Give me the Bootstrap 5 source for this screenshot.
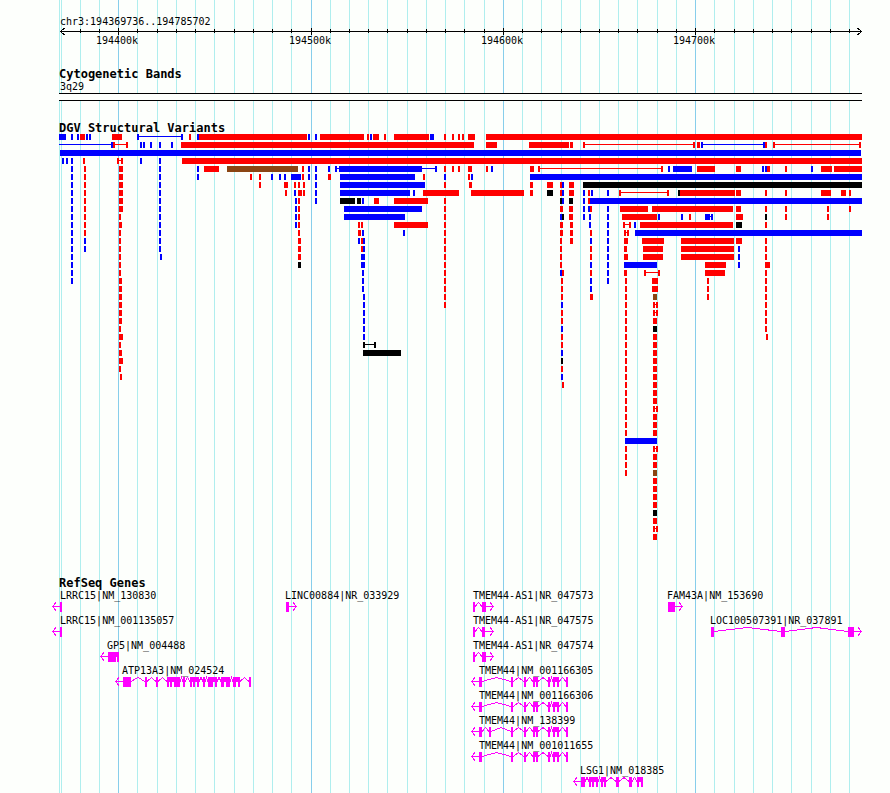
<!DOCTYPE html>
<html lang="en">
<head>
<meta charset="utf-8">
<meta name="viewport" content="width=device-width, initial-scale=1">
<title>chr3:194369736..194785702</title>
<link href="https://cdn.jsdelivr.net/npm/bootstrap@5.3.0/dist/css/bootstrap.min.css" rel="stylesheet">
<style>
body { background: #fdfffc; color: #000; font-family: "DejaVu Sans Mono", "Liberation Mono", monospace; }
.track-title { font-size: 12px; line-height: 12px; padding-left: 59px; }
.track-svg { overflow: visible; }
.track-svg text { font-size: 10px; fill: #000; white-space: pre; }
.shapes { shape-rendering: crispEdges; }
</style>
</head>
<body>
<main class="position-relative overflow-hidden">
  <svg id="grid" class="position-absolute top-0 start-0 w-100 h-100 shapes" viewBox="0 0 890 793" preserveAspectRatio="none" aria-hidden="true"></svg>
  <div class="position-relative d-flex flex-column">
    <section aria-label="Position">
      <svg id="ruler" class="track-svg d-block w-100" viewBox="0 0 890 68"></svg>
    </section>
    <section>
      <h2 class="track-title fw-bold m-0">Cytogenetic Bands</h2>
      <svg id="bands" class="track-svg d-block w-100" viewBox="0 0 890 42"></svg>
    </section>
    <section>
      <h2 class="track-title fw-bold m-0">DGV Structural Variants</h2>
      <svg id="variants" class="track-svg d-block w-100" viewBox="0 0 890 443"></svg>
    </section>
    <section>
      <h2 class="track-title fw-bold m-0">RefSeq Genes</h2>
      <svg id="genes" class="track-svg d-block w-100" viewBox="0 0 890 204"></svg>
    </section>
  </div>
</main>
<script src="https://cdn.jsdelivr.net/npm/bootstrap@5.3.0/dist/js/bootstrap.bundle.min.js"></script>
<script>
const put = (id, html) => { document.getElementById(id).innerHTML = html; };
const box = (x, y, w, h, fill) => `<rect x="${x}" y="${y}" width="${w}" height="${h}" fill="${fill}"/>`;
const label = (x, y, s) => `<text x="${x}" y="${y}">${s}</text>`;
const group = s => `<g class="shapes">${s}</g>`;
const line = (pts, c) => `<polyline points="${pts}" fill="none" stroke="${c}"/>`;

// Vertical guides every 10 kb, darker every 100 kb
const major = [118, 311, 503, 695];
const minor = [80, 99, 137, 157, 176, 195, 214, 234, 253, 272, 291, 330, 349, 368, 387, 407, 426, 445, 464, 484,
  522, 541, 561, 580, 599, 618, 637, 657, 676, 714, 734, 753, 772, 791, 811, 830, 849];
put('grid', [59, 61, ...minor].map(x => box(x, 0, 1, 793, '#afeeee')).join('') +
  major.map(x => box(x, 0, 1, 793, '#87ceeb')).join(''));

// Ruler
put('ruler', group(box(60, 31, 802, 1, '#000') +
  minor.map(x => box(x, 29, 1, 4, '#000')).join('') +
  major.map(x => box(x, 28, 1, 7, '#000')).join('') +
  line('64.5,28 60.5,31.5 64.5,35', '#000') + line('857.5,28 861.5,31.5 857.5,35', '#000')) +
  label(60, 25, 'chr3:194369736..194785702') +
  major.map((x, i) => label(x - 22, 44, `194${i + 4}00k`)).join(''));

// Chromosome band
put('bands', group(box(59, 13, 803, 8, '#fdfffc') + box(59, 13, 803, 1, '#000') + box(59, 20, 803, 1, '#000')) +
  label(60, 10, '3q29'));

// Variants, one string per row. "R10-20" is a bar, "R10" a 2-unit mark, "R10~20" a thin connector
const colours = { R: '#f00', B: '#00f', K: '#000', N: '#8b4513' };
const rows = [
 'B59-66 B71 B77 R80-85 B86 B89 R112-122 B137~183 B137 B181 R189 B197 R199-307 B308 B315 R320-364 R367 B370 R373-379 R384 R394-429 B430-434 R444 R452 R458 R462 R468-475 R486-862',
 'B59~113 B111 R113~128 R113 R126 B140 B143 B150 B159 B171 R181-474 R486-497 R529-569 R570-573 R583~695 R583 R693 R697-700 B701~765 B701 B763 R765 R773~861 R773 R859',
 'B60-861',
 'B62 B66 B71 R83 R117~123 R117 R121 B140 B159 R182-862',
 'B71 R84 R119-123 B159 B197 R204-219 N227-298 R302 B308 B315 B328 B335~437 B335 B339-422 B435 R444 R452 R458 R468-472 R486 B491 R530-534 R538~663 R538 R661 B668 B673-692 R697-715 R736-741 B762 B765 R767-770 R785 B811 R821-832 R834-862',
 'B71 R84 R119-123 B159 B197 R250 R259 B271 B279 B284 B291-301 R302 B308 B315 R328-331 B340-415 R423 B444 R468 B471 B530-862',
 'B71 R84 R119-123 B159 R259 R284-288 R294 R298 R303 B315 B340-425 R444 R469-472 R530-533 R547-553 R560 B562 R569-574 K583-862',
 'B71 R84 R119-123 B159 R285 B294 R298-302 R303 B315 B340-410 B413 R423-459 R471-524 R530-533 K547-553 R560 B562 R569-574 B583 R588 B591 B607 R619~669 R619 R667 K678 R680-735 R736-741 R765 R785 R821-831 R841-846 R849',
 'B71 R84 R119-123 B159 B295 R298 B315 K340-355 K357-361 B362 R374-379 R394-428 R444 K560 B562 K569-573 B583 R588 B590-862',
 'B71 R84 R119-123 B159 B295 R298 B344-422 R444 R560-563 R569-573 B583 B588 R590 B607 R620-648 R652-733 R736-741 R765 R785 R827 R849',
 'B71 R84 R119 B159 B295 R298 B344-405 R444 B560 K562 R569-573 B583 B589 B607 R622-657 B658 B681 R689 B705~713 B705-710 B711 R736-743 K765 R785 R827',
 'B71 R84 R119-122 B159 B295 R298 R358 R361 R394-428 R444 R560-563 R570-573 B589 B607 R623~631 R623 R629 B634 R640-733 K736-742 R765',
 'B71 R84 R119 B159 R298 R358-361 B362 B403 R444 R560-563 R570-573 R590 B607 R624~629 R624 R627 B635-862',
 'B71 B84 R119 B159 R298-301 B358 R361 B363 R444 R560 R570-573 B590 B607 R624-628 R642-664 R681-734 R736-742 R765',
 'B71 B84 R119 B159 R298-301 R361 B363 R444 R560 R590 B607 R624-627 R643-663 R681-734 B738 R765',
 'B71 R119 B160 R298-301 B361-365 R444 R560 R590 B607 R624-628 R643-663 R681-734 B738 R765',
 'B71 R119 K298-301 B361-365 R444 R560 B590 B607 B624-657 R705-726 B738 R765-770',
 'B71 R119 B362 R444 B560 R562 R590 B607 R624-627 R644~660 R644 R658 R705-725 R765',
 'B71 R119-122 B362 R444 R561 B590 B607 R625 R652-658 R707 R765',
 'R119-122 B362 R444 R561 B590 R625 R652-658 R707 R765',
 'R119-122 B363 R444 R561 R590-593 R625 N653-657 R707 R765',
 'R119-122 B363 R444 B561 R625 R653~658 R653 R656 R765',
 'R119-122 B363 R561 R625 R653~658 R653 R656 R765',
 'R119-122 B363 R561 R625 R653-657 R765',
 'R119 B363 B561 R625 K653-657 R765',
 'R119-123 B363 R561 R625 R653-657 R766',
 'R119 K363~376 K363 K374 R561 R625 R653-657',
 'R119-122 K363-401 B561 R625 R653-657',
 'R119-123 K561 R625 R653-657',
 'R119 R561 R625 R653-657',
 'R120 B561 R625 R653-657',
 'R562 R625 R653-657',
 'R625 R653-657',
 'R625 R653-657',
 'R625 R653~658 R653 R656',
 'R625 R653-657',
 'R625 R653-657',
 'R625 R653-657',
 'B625-657',
 'R625 R653~658 R653 R656',
 'R625 R653-657',
 'R625 R653-657',
 'R625 N653-657',
 'R653-657', 'R653-657', 'R653-657', 'R653-657',
 'K653-657',
 'R653-657',
 'R653~658 R653 R656',
 'R653-657'
];
put('variants', group(rows.map((row, i) => row.split(' ').map(item => {
  const [, c, a, kind, b] = item.match(/^(\w)(\d+)(?:([-~])(\d+))?$/);
  const y = i * 8, x = +a, w = b ? b - a : 2;
  return kind === '~' ? box(x, y + 2, w, 1, colours[c]) : box(x, y, w, 6, colours[c]);
}).join('')).join('')));

// Genes: [row, label x, name, arrow tip, exons as start-end]
const tmem = '479-482 511-513 524-526 533-535 536-538 548-550 553-555 557-559 566-568';
const genes = [
  [0, 60, 'LRRC15|NM_130830', 52, '60-62'],
  [1, 60, 'LRRC15|NM_001135057', 52, '60-62'],
  [2, 107, 'GP5|NM_004488', 100, '108-116 117-119'],
  [3, 122, 'ATP13A3|NM_024524', 115, '123-131 145-147 156-158 167-169 170-172 174-180 183-185 190-192 193-195 197-199 203-205 208-213 215-217 221-224 226-230 233-236 238-240 249-251'],
  [0, 285, 'LINC00884|NR_033929', 297, '286-289'],
  [0, 473, 'TMEM44-AS1|NR_047573', 494, '473-475 482-486'],
  [1, 473, 'TMEM44-AS1|NR_047575', 494, '473-475 482-485'],
  [2, 473, 'TMEM44-AS1|NR_047574', 494, '473-475 482-486'],
  [3, 479, 'TMEM44|NM_001166305', 471, tmem],
  [4, 479, 'TMEM44|NM_001166306', 471, tmem],
  [5, 479, 'TMEM44|NM_138399', 471, tmem.replace(' ', ' 489-491 ')],
  [6, 479, 'TMEM44|NM_001011655', 471, tmem],
  [7, 580, 'LSG1|NM_018385', 573, '581-585 589-591 592-594 596-598 601-603 604-606 616-619 629-632 637-639 641-643'],
  [0, 667, 'FAM43A|NM_153690', 683, '668-675'],
  [1, 710, 'LOC100507391|NR_037891', 862, '711-714 781-785 848-854']
];
put('genes', genes.map(([r, lx, name, tip, list]) => {
  const top = r * 25 + 13, mid = top + 4, c = '#f0f';
  const ex = list.split(' ').map(e => e.split('-').map(Number));
  const left = tip < ex[0][0], end = left ? ex[0][0] : ex[ex.length - 1][1];
  const back = left ? tip + 4 : tip - 4;
  let s = box(Math.min(tip, end), mid, Math.abs(end - tip), 1, c) +
    line(`${back},${mid - 3.5} ${left ? tip + .5 : tip - .5},${mid + .5} ${back},${mid + 4.5}`, c);
  ex.forEach(([a, b], i) => {
    s += box(a, top, b - a, 10, c);
    const next = ex[i + 1];
    if (next) s += line(`${b},${mid + .5} ${(b + next[0]) / 2},${mid - 3.5} ${next[0]},${mid + .5}`, c);
  });
  return group(s) + label(lx, r * 25 + 10, name);
}).join(''));
</script>
</body>
</html>
